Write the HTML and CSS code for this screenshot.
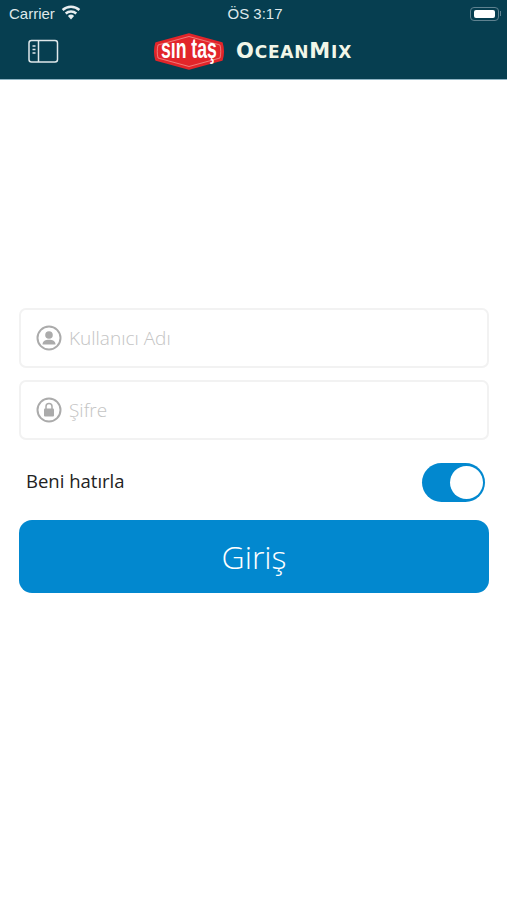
FILE: index.html
```html
<!DOCTYPE html>
<html lang="en">
<head>
    <meta charset="UTF-8">
    <meta name="viewport" content="width=device-width, initial-scale=1.0">
    <title>OceanMix Giriş</title>
    <link rel="stylesheet" href="styles.css">
</head>
<body>
    <header class="top-bar">
        <div class="status-bar">
            <div class="status-left">
                <span>Carrier</span>
                <svg class="wifi-icon" width="20" height="15" viewBox="0 0 20 15">
                    <path d="M10 14.5 6.9 10.9a4.6 4.6 0 0 1 6.2 0z" fill="#e8eef0"/>
                    <path d="M4.7 8.5a8 8 0 0 1 10.6 0M1.6 5a12.6 12.6 0 0 1 16.8 0" fill="none" stroke="#e8eef0" stroke-width="2.4"/>
                </svg>
            </div>
            <div class="status-time">ÖS 3:17</div>
            <div class="battery">
                <div class="battery-body"><div class="battery-fill"></div></div>
                <div class="battery-cap"></div>
            </div>
        </div>
        <div class="nav-bar">
            <svg class="menu-icon" width="32" height="25" viewBox="0 0 32 25">
                <rect x="2" y="1.500" width="28.500" height="21.500" rx="2.500" fill="none" stroke="#dfe8ea" stroke-width="1.500"/>
                <path d="M11.500 1.500v21.500" stroke="#dfe8ea" stroke-width="1.500"/>
                <path d="M5.500 7h3M5.500 10.500h3M5.500 14h3" stroke="#dfe8ea" stroke-width="1.300"/>
            </svg>
            <div class="brand">
                <svg class="brand-logo" width="72" height="37" viewBox="0 0 72 37">
                    <path d="M36 1 69 10c1.500 5 1.500 12 0 17L36 36 3 27c-1.500-5-1.500-12 0-17z" fill="#e2252a" stroke="#e2252a" stroke-width="1.500" stroke-linejoin="round"/>
                    <path d="M36 3.500 67 12c1 4 1 9 0 13L36 33.500 5 25c-1-4-1-9 0-13z" fill="none" stroke="#f3b7b2" stroke-width=".6"/>
                    <text class="logo-text" transform="translate(8 25) scale(.84 1.3)">sın taş</text>
                </svg>
                <span class="brand-name"><span class="brand-cap">O</span>cean<span class="brand-cap">M</span>ix</span>
            </div>
        </div>
    </header>

    <main class="login-form">
        <label class="field">
            <svg class="field-icon" width="26" height="26" viewBox="0 0 26 26">
                <circle cx="13" cy="13" r="11.500" fill="none" stroke="#ababab" stroke-width="2"/>
                <circle cx="13" cy="10" r="3.800" fill="#ababab"/>
                <path d="M6.500 19.500c0-3.500 3-4.800 6.500-4.800s6.500 1.300 6.500 4.800z" fill="#ababab"/>
            </svg>
            <input type="text" placeholder="Kullanıcı Adı">
        </label>
        <label class="field">
            <svg class="field-icon" width="26" height="26" viewBox="0 0 26 26">
                <circle cx="13" cy="13" r="11.500" fill="none" stroke="#ababab" stroke-width="2"/>
                <rect x="8" y="11.500" width="10" height="8" rx="1" fill="#ababab"/>
                <path d="M10 12V9.500a3 3 0 0 1 6 0V12" fill="none" stroke="#ababab" stroke-width="1.500"/>
            </svg>
            <input type="password" placeholder="Şifre">
        </label>
        <div class="remember-row">
            <span>Beni hatırla</span>
            <div class="switch"><div class="switch-knob"></div></div>
        </div>
        <button type="button" class="login-btn">Giriş</button>
    </main>
</body>
</html>
```

FILE: styles.css
```css
* {
    margin: 0;
    padding: 0;
    box-sizing: border-box;
    font-family: 'Open Sans', 'Noto Sans', sans-serif;
}

body {
    background-color: white;
}

.top-bar {
    height: 80px;
    background-color: #063e50;
    border-bottom: 1px solid #8fb4c4;
    color: #dfe8ea;
}

.status-bar {
    height: 27px;
    padding: 0 6px 0 9px;
    display: grid;
    grid-template-columns: 1fr auto 1fr;
    align-items: center;
    font-size: 15px;
}

.status-left {
    display: flex;
    align-items: center;
    gap: 6px;
}

.status-left span,
.status-time {
    font-family: 'Liberation Sans', sans-serif;
}

.wifi-icon {
    margin-bottom: 3px;
}

.battery {
    justify-self: end;
    display: flex;
    align-items: center;
    gap: 1px;
}

.battery-body {
    width: 29px;
    height: 14px;
    padding: 2px 3px;
    border: 1px solid #5f8290;
    border-radius: 4px;
}

.battery-fill {
    height: 100%;
    background-color: white;
    border-radius: 2px;
}

.battery-cap {
    width: 1px;
    height: 5px;
    background-color: #5f8290;
}

.nav-bar {
    height: 52px;
    padding: 0 27px;
    display: flex;
    align-items: center;
    gap: 94px;
}

.menu-icon {
    margin-bottom: 3px;
}

.brand {
    display: flex;
    align-items: center;
    gap: 11px;
    margin-bottom: 3px;
}

.logo-text {
    font-family: 'Liberation Sans', sans-serif;
    font-size: 21px;
    font-weight: 700;
    fill: white;
}

.brand-name,
.brand-cap {
    font-family: 'DejaVu Sans', sans-serif;
    font-weight: 700;
    color: #f1f6e8;
}

.brand-name {
    margin-bottom: 2px;
    font-size: 17px;
    letter-spacing: 0.800px;
    text-transform: uppercase;
}

.brand-cap {
    font-size: 21px;
}

.login-form {
    padding: 228px 18px 0 19px;
    display: flex;
    flex-direction: column;
}

.field {
    height: 60px;
    margin-bottom: 12px;
    padding: 0 15px;
    display: flex;
    align-items: center;
    gap: 7px;
    border: 2px solid #f2f2f2;
    border-radius: 7px;
}

.field-icon {
    flex-shrink: 0;
}

.field input {
    width: 100%;
    border: none;
    outline: none;
    font-size: 19px;
    font-weight: 300;
    color: #333;
}

.field input::placeholder {
    color: #c4c4c4;
    opacity: 1;
}

.remember-row {
    height: 68px;
    padding: 0 4px 0 7px;
    display: flex;
    align-items: center;
    justify-content: space-between;
    font-size: 18.500px;
    color: #222;
}

.remember-row span {
    margin-bottom: 12px;
}

.switch {
    width: 63px;
    height: 39px;
    margin-bottom: 7px;
    padding: 3px 2px;
    display: flex;
    justify-content: flex-end;
    background-color: #0288cf;
    border-radius: 20px;
}

.switch-knob {
    width: 33px;
    height: 33px;
    background-color: white;
    border-radius: 50%;
}

.login-btn {
    height: 73px;
    background-color: #0288cf;
    color: white;
    border: none;
    border-radius: 13px;
    font-size: 32px;
    font-weight: 300;
    cursor: pointer;
}
```
